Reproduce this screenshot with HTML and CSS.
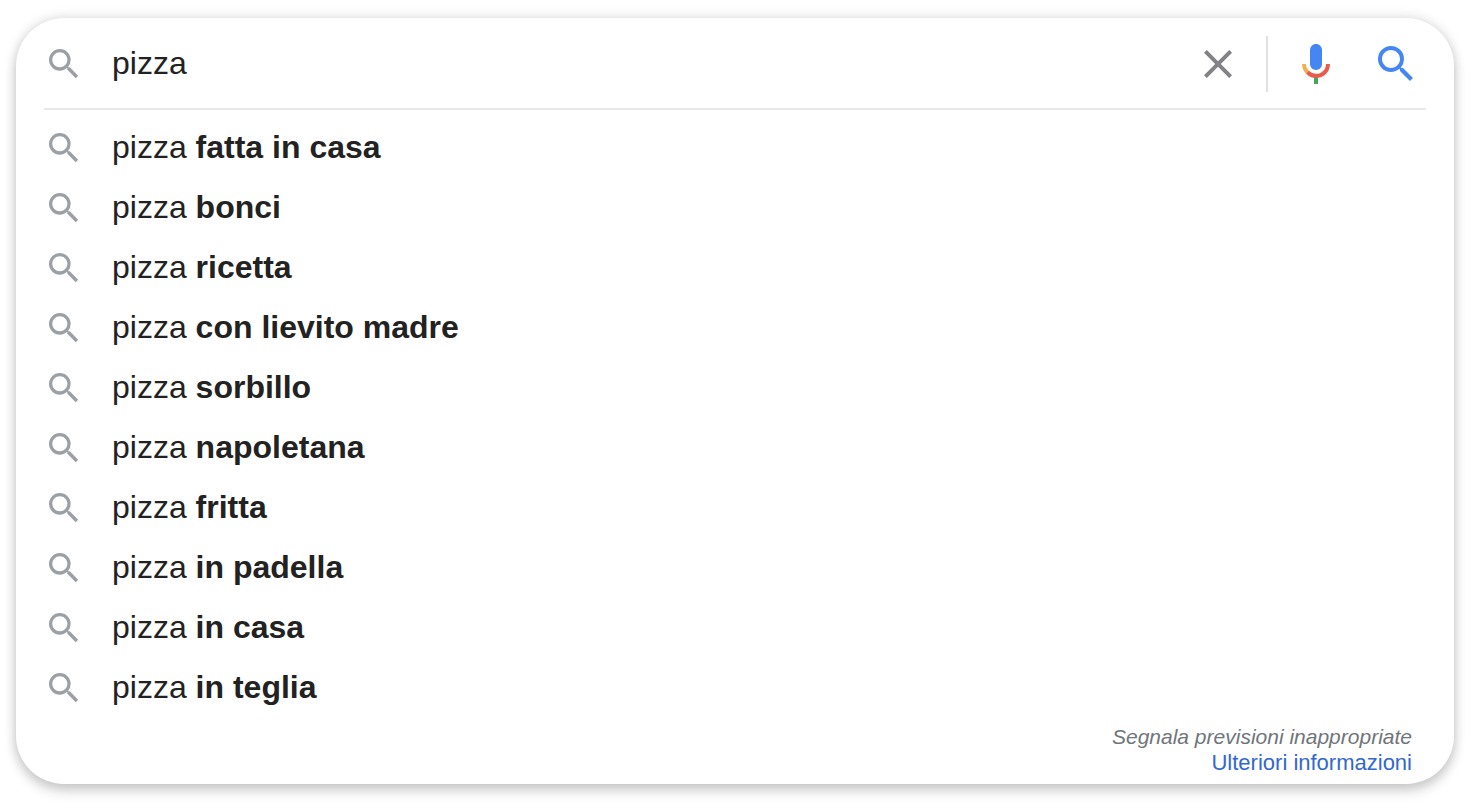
FILE: index.html
```html
<!DOCTYPE html>
<html lang="it">
<head>
    <meta charset="UTF-8">
    <meta name="viewport" content="width=device-width, initial-scale=1.0">
    <title>pizza</title>
    <link rel="stylesheet" href="styles.css">
</head>
<body>
    <!-- lente condivisa da tutte le righe -->
    <svg class="sprite" aria-hidden="true">
        <symbol id="lens" viewBox="0 0 24 24">
            <path d="M15.5 14h-.79l-.28-.27A6.471 6.471 0 0 0 16 9.5 6.5 6.5 0 1 0 9.5 16c1.61 0 3.09-.59 4.23-1.57l.27.28v.79l5 4.99L20.49 19l-4.99-5zm-6 0C7.01 14 5 11.99 5 9.5S7.01 5 9.5 5 14 7.01 14 9.5 11.99 14 9.5 14z"/>
        </symbol>
    </svg>

    <div class="search-card">
        <form class="search-bar" role="search">
            <svg class="icon"><use href="#lens"/></svg>
            <input class="search-input" type="text" name="q" value="pizza" aria-label="Cerca" autocomplete="off">
            <button class="icon-btn clear-btn" type="reset" aria-label="Cancella">
                <svg viewBox="0 0 24 24"><path d="M19 6.41L17.59 5 12 10.59 6.41 5 5 6.41 10.59 12 5 17.59 6.41 19 12 13.41 17.59 19 19 17.59 13.41 12z"/></svg>
            </button>
            <span class="separator"></span>
            <button class="icon-btn" type="button" aria-label="Ricerca vocale">
                <svg viewBox="0 0 24 24">
                    <path class="mic-body" d="m12 15c1.66 0 3-1.31 3-2.97v-7.02c0-1.66-1.34-3.01-3-3.01s-3 1.34-3 3.01v7.02c0 1.66 1.34 2.97 3 2.97z"/>
                    <path class="mic-stem" d="m11 18.08h2v3.92h-2z"/>
                    <path class="mic-left" d="m7.05 16.87c-1.27-1.33-2.05-2.83-2.05-4.87h2c0 1.45 0.56 2.42 1.47 3.38v0.32l-1.15 1.18z"/>
                    <path class="mic-arc" d="m12 16.93a4.97 5.25 0 0 1 -3.54 -1.55l-1.41 1.49c1.26 1.34 3.02 2.13 4.95 2.13 3.87 0 6.99-2.92 6.99-7h-1.99c0 2.92-2.24 4.93-5 4.93z"/>
                </svg>
            </button>
            <button class="icon-btn submit-btn" type="submit" aria-label="Cerca">
                <svg><use href="#lens"/></svg>
            </button>
        </form>

        <ul class="suggestions">
            <li><a class="suggestion" href="#"><svg class="icon"><use href="#lens"/></svg><span class="suggestion-text">pizza <b>fatta in casa</b></span></a></li>
            <li><a class="suggestion" href="#"><svg class="icon"><use href="#lens"/></svg><span class="suggestion-text">pizza <b>bonci</b></span></a></li>
            <li><a class="suggestion" href="#"><svg class="icon"><use href="#lens"/></svg><span class="suggestion-text">pizza <b>ricetta</b></span></a></li>
            <li><a class="suggestion" href="#"><svg class="icon"><use href="#lens"/></svg><span class="suggestion-text">pizza <b>con lievito madre</b></span></a></li>
            <li><a class="suggestion" href="#"><svg class="icon"><use href="#lens"/></svg><span class="suggestion-text">pizza <b>sorbillo</b></span></a></li>
            <li><a class="suggestion" href="#"><svg class="icon"><use href="#lens"/></svg><span class="suggestion-text">pizza <b>napoletana</b></span></a></li>
            <li><a class="suggestion" href="#"><svg class="icon"><use href="#lens"/></svg><span class="suggestion-text">pizza <b>fritta</b></span></a></li>
            <li><a class="suggestion" href="#"><svg class="icon"><use href="#lens"/></svg><span class="suggestion-text">pizza <b>in padella</b></span></a></li>
            <li><a class="suggestion" href="#"><svg class="icon"><use href="#lens"/></svg><span class="suggestion-text">pizza <b>in casa</b></span></a></li>
            <li><a class="suggestion" href="#"><svg class="icon"><use href="#lens"/></svg><span class="suggestion-text">pizza <b>in teglia</b></span></a></li>
        </ul>

        <div class="card-footer">
            <a class="report-link" href="#">Segnala previsioni inappropriate</a>
            <a class="info-link" href="#">Ulteriori informazioni</a>
        </div>
    </div>
</body>
</html>
```

FILE: styles.css
```css
* {
    box-sizing: border-box;
}
body {
    margin: 0;
    padding: 18px 16px 22px;
    background: #fff;
    color: #222;
    font-family: Arial, "Liberation Sans", sans-serif;
    font-size: 32px;
}
a {
    color: inherit;
    text-decoration: none;
}
.sprite {
    display: none;
}
.search-card {
    background: #fff;
    border-radius: 48px;
    box-shadow: 0 0 12px rgba(32, 33, 36, 0.18), 0 8px 12px rgba(32, 33, 36, 0.16);
}

/* barra di ricerca */
.search-bar {
    display: flex;
    align-items: center;
    margin: 0 28px;
    padding: 18px 6px 16px 0;
    border-bottom: 2px solid #e8e8e8;
}
.icon {
    flex: none;
    width: 40px;
    height: 40px;
    margin-right: 28px;
    fill: #9aa0a6;
}
.search-input {
    flex: 1;
    min-width: 0;
    height: 56px;
    padding: 0 0 2px;
    border: none;
    outline: none;
    background: transparent;
    color: inherit;
    font: inherit;
}
.icon-btn {
    flex: none;
    width: 48px;
    height: 48px;
    padding: 0;
    border: none;
    background: none;
    cursor: pointer;
}
.icon-btn svg {
    display: block;
    width: 48px;
    height: 48px;
}
.clear-btn {
    fill: #808285;
}
.submit-btn {
    margin-left: 32px;
    fill: #4487f4;
}
.separator {
    width: 2px;
    height: 56px;
    margin: 0 24px;
    background: #dfe1e5;
}
.mic-body {
    fill: #4487f4;
}
.mic-stem {
    fill: #43a65a;
}
.mic-left {
    fill: #f3b050;
}
.mic-arc {
    fill: #ea5a4d;
}

/* suggerimenti */
.suggestions {
    list-style: none;
    margin: 0;
    padding: 8px 0 0;
}
.suggestion {
    display: flex;
    align-items: center;
    height: 60px;
    padding: 0 28px;
}
.suggestion:hover {
    background: #eee;
}
.suggestion-text {
    padding-bottom: 2px;
}

.card-footer {
    display: flex;
    flex-direction: column;
    align-items: flex-end;
    padding: 6px 42px 8px;
    font-size: 22px;
    line-height: 26px;
}
.report-link {
    color: #70757a;
    font-size: 21px;
    font-style: italic;
}
.info-link {
    color: #3367d0;
}
```
